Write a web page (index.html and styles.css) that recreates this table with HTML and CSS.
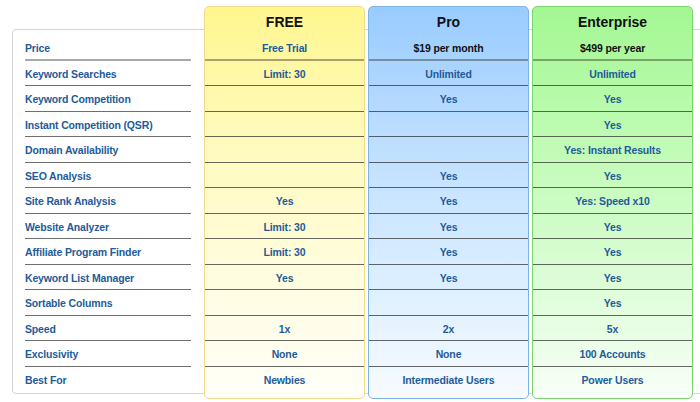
FILE: index.html
```html
<!DOCTYPE html>
<html>
<head>
<meta charset="utf-8">
<link rel="stylesheet" href="styles.css">
</head>
<body>
<div class="panel">
  <div class="labels">
    <div class="row first">Price</div>
    <div class="row">Keyword Searches</div>
    <div class="row">Keyword Competition</div>
    <div class="row">Instant Competition (QSR)</div>
    <div class="row">Domain Availability</div>
    <div class="row">SEO Analysis</div>
    <div class="row">Site Rank Analysis</div>
    <div class="row">Website Analyzer</div>
    <div class="row">Affiliate Program Finder</div>
    <div class="row">Keyword List Manager</div>
    <div class="row">Sortable Columns</div>
    <div class="row">Speed</div>
    <div class="row">Exclusivity</div>
    <div class="row last">Best For</div>
  </div>
  <div class="plan free">
    <div class="title">FREE</div>
    <div class="cell first">Free Trial</div>
    <div class="cell">Limit: 30</div>
    <div class="cell"></div>
    <div class="cell"></div>
    <div class="cell"></div>
    <div class="cell"></div>
    <div class="cell">Yes</div>
    <div class="cell">Limit: 30</div>
    <div class="cell">Limit: 30</div>
    <div class="cell">Yes</div>
    <div class="cell"></div>
    <div class="cell">1x</div>
    <div class="cell">None</div>
    <div class="cell last">Newbies</div>
  </div>
  <div class="plan pro">
    <div class="title">Pro</div>
    <div class="cell first price">$19 per month</div>
    <div class="cell">Unlimited</div>
    <div class="cell">Yes</div>
    <div class="cell"></div>
    <div class="cell"></div>
    <div class="cell">Yes</div>
    <div class="cell">Yes</div>
    <div class="cell">Yes</div>
    <div class="cell">Yes</div>
    <div class="cell">Yes</div>
    <div class="cell"></div>
    <div class="cell">2x</div>
    <div class="cell">None</div>
    <div class="cell last">Intermediate Users</div>
  </div>
  <div class="plan ent">
    <div class="title">Enterprise</div>
    <div class="cell first price">$499 per year</div>
    <div class="cell">Unlimited</div>
    <div class="cell">Yes</div>
    <div class="cell">Yes</div>
    <div class="cell">Yes: Instant Results</div>
    <div class="cell">Yes</div>
    <div class="cell">Yes: Speed x10</div>
    <div class="cell">Yes</div>
    <div class="cell">Yes</div>
    <div class="cell">Yes</div>
    <div class="cell">Yes</div>
    <div class="cell">5x</div>
    <div class="cell">100 Accounts</div>
    <div class="cell last">Power Users</div>
  </div>
</div>
</body>
</html>
```
FILE: styles.css
```css
html, body {
  margin: 0;
  padding: 0;
  background: #ffffff;
  overflow: hidden;
  width: 700px;
  height: 402px;
}
body {
  font-family: "Liberation Sans", Arial, sans-serif;
  font-weight: bold;
  font-size: 10.5px;
  letter-spacing: -0.15px;
  color: #1e5b9a;
}
.panel {
  margin: 29px 0 0 12px;
  width: 700px;
  height: 363px;
  border: 1px solid #d4d4d4;
  border-radius: 4px;
  display: flex;
  align-items: flex-start;
  box-sizing: content-box;
}
.labels {
  width: 166px;
  margin: 5px 13px 0 12px;
}
.row {
  height: 25.5px;
  box-sizing: border-box;
  border-bottom: 1px solid #6f6f6f;
  display: flex;
  align-items: center;
  padding-top: 2px;
}
.row.first {
  border-bottom: 2px solid #a8a8a8;
}
.row.last {
  border-bottom: none;
}
.plan {
  width: 161px;
  box-sizing: border-box;
  margin-top: -24px;
  margin-right: 3px;
  border: 1px solid;
  border-radius: 5px;
  padding-bottom: 6px;
}
.title {
  height: 28px;
  display: flex;
  align-items: center;
  justify-content: center;
  font-size: 14px;
  letter-spacing: 0;
  color: #111111;
  padding-top: 1px;
  box-sizing: border-box;
}
.cell {
  height: 25.5px;
  box-sizing: border-box;
  border-bottom: 1px solid rgba(40, 40, 40, 0.7);
  display: flex;
  align-items: center;
  justify-content: center;
  padding-top: 2px;
}
.cell.first {
  border-bottom: 2px solid rgba(60, 60, 40, 0.45);
}
.cell.last {
  border-bottom: none;
}
.cell.price {
  color: #111111;
}
.free {
  border-color: #f3d98c;
  background: linear-gradient(to bottom, #fff68f 0%, #fffab8 30%, #fffde0 70%, #fffff8 100%);
}
.pro {
  border-color: #7db4e6;
  background: linear-gradient(to bottom, #99ccff 0%, #b9dcff 30%, #dcefff 70%, #f7fbff 100%);
}
.ent {
  border-color: #7dd36e;
  background: linear-gradient(to bottom, #a3f792 0%, #bcfbb0 30%, #dcfdd6 70%, #f8fff7 100%);
}
```
